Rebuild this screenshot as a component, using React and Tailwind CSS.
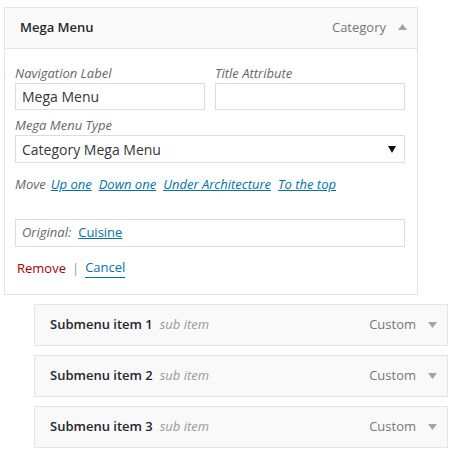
const FONT = { fontFamily: '"Open Sans", "Noto Sans", sans-serif' };

function Arrow({ up }) {
    return (
        <svg width="9" height="6" viewBox="0 0 9 6" className="shrink-0">
            {up ? <path d="M0 6 L4.5 0 L9 6 Z" fill="#a0a5aa" /> : <path d="M0 0 L9 0 L4.5 6 Z" fill="#a0a5aa" />}
        </svg>
    );
}

function SubItem({ n }) {
    return (
        <div className="ml-[34px] w-[414px] h-[42px] border border-[#e5e5e5] bg-[#f9f9f9] flex items-center pl-[15px] pr-[10px]">
            <span className="text-[13px] font-semibold text-[#23282d]">Submenu item {n}</span>
            <span className="ml-[7px] text-[13px] italic text-[#999]">sub item</span>
            <span className="ml-auto text-[13px] text-[#777]">Custom</span>
            <span className="ml-[12px]"><Arrow /></span>
        </div>
    );
}

export default function App() {
    return (
        <div className="w-[454px] h-[454px] bg-white overflow-hidden pt-[7px]" style={FONT}>
            {/* open item */}
            <div className="ml-[4px] w-[414px] border border-[#e5e5e5] bg-white">
                <div className="h-[41px] bg-[#fafafa] border-b border-[#e5e5e5] flex items-center pl-[15px] pr-[10px]">
                    <span className="text-[13px] font-semibold text-[#23282d]">Mega Menu</span>
                    <span className="ml-auto text-[13px] text-[#777]">Category</span>
                    <span className="ml-[12px] -mt-[2px]"><Arrow up /></span>
                </div>
                <div className="pl-[10px] pt-[15px] pb-[16px]">
                    <div className="flex gap-[10px]">
                        <label className="w-[190px]">
                            <div className="text-[13px] italic text-[#666] leading-[18px]">Navigation Label</div>
                            <div className="mt-[1px] h-[27px] border border-[#ddd] flex items-center px-[6px] text-[14px] text-[#32373c]">Mega Menu</div>
                        </label>
                        <label className="w-[190px]">
                            <div className="text-[13px] italic text-[#666] leading-[18px]">Title Attribute</div>
                            <div className="mt-[1px] h-[27px] border border-[#ddd]"></div>
                        </label>
                    </div>
                    <div className="mt-[6px] text-[13px] italic text-[#666] leading-[18px]">Mega Menu Type</div>
                    <div className="mt-[1px] w-[390px] h-[28px] border border-[#ddd] flex items-center pl-[6px] pr-[8px] text-[14px] text-[#32373c]">
                        Category Mega Menu
                        <svg width="8" height="7" viewBox="0 0 8 7" className="ml-auto">
                            <path d="M0 0 L8 0 L4 7 Z" fill="#111" />
                        </svg>
                    </div>
                    <div className="mt-[12px] leading-[18px] text-[13px] italic flex gap-[7px]">
                        <span className="text-[#666] -mr-[2px]">Move</span>
                        <a className="text-[#0073aa] underline">Up one</a>
                        <a className="text-[#0073aa] underline">Down one</a>
                        <a className="text-[#0073aa] underline">Under Architecture</a>
                        <a className="text-[#0073aa] underline">To the top</a>
                    </div>
                    <div className="mt-[26px] w-[390px] h-[28px] border border-[#ddd] flex items-center pl-[6px] text-[13px]">
                        <span className="italic text-[#666]">Original:</span>
                        <a className="ml-[7px] text-[#0073aa] underline">Cuisine</a>
                    </div>
                    <div className="mt-[10px] leading-[20px] text-[13px] flex items-center">
                        <a className="text-[#a00] ml-[2px]">Remove</a>
                        <span className="mx-[6px] text-[#999]">|</span>
                        <a className="text-[#0073aa] border-b border-[#0073aa]">Cancel</a>
                    </div>
                </div>
            </div>
            <div className="mt-[9px] flex flex-col gap-[9px]">
                <SubItem n={1} />
                <SubItem n={2} />
                <SubItem n={3} />
            </div>
        </div>
    );
}
